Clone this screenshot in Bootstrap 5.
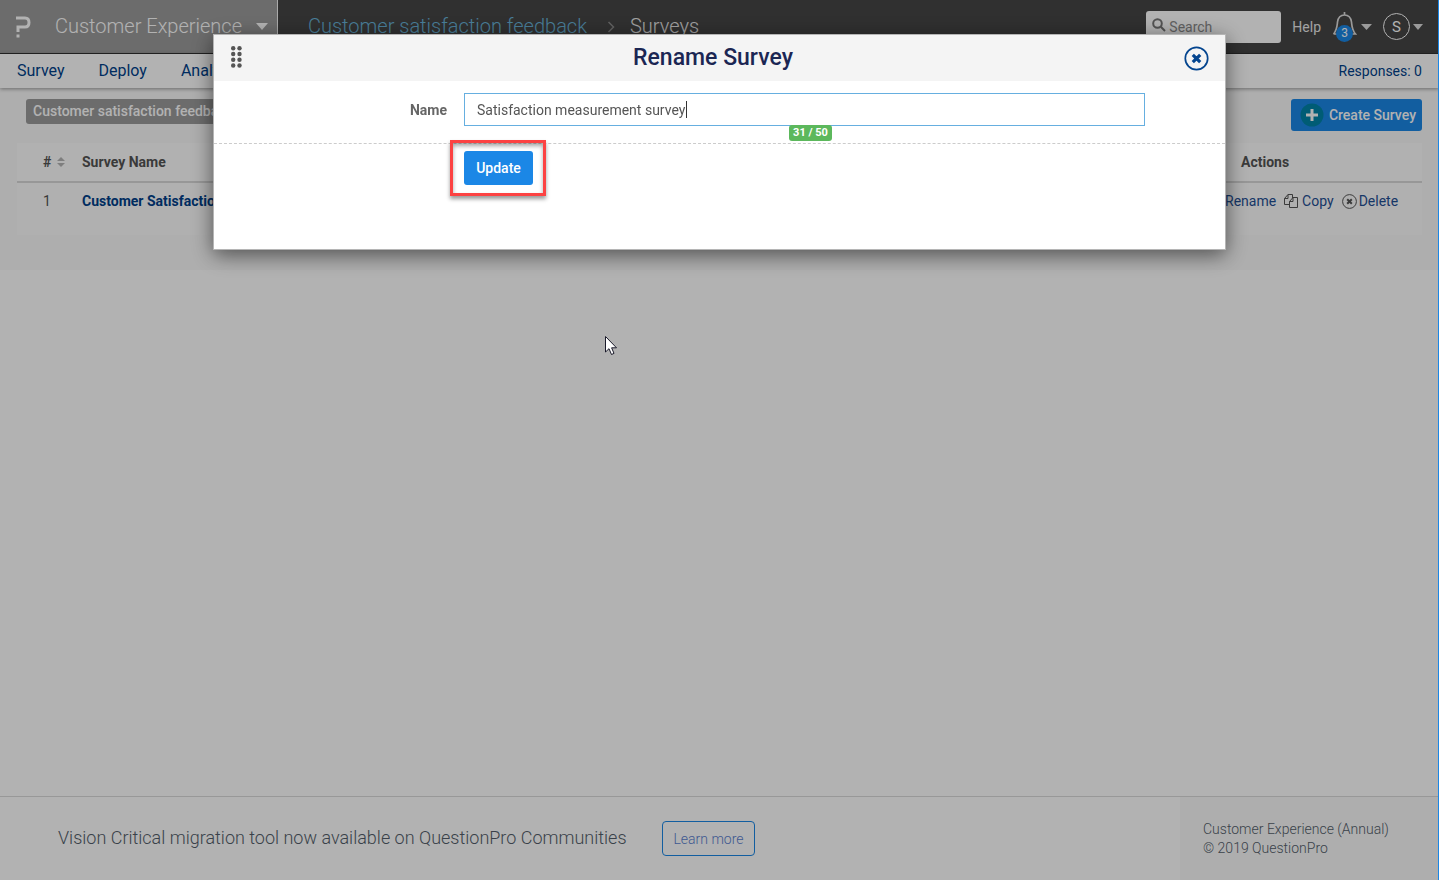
<!DOCTYPE html>
<html lang="en">
<head>
<meta charset="utf-8">
<meta name="viewport" content="width=device-width, initial-scale=1">
<title>Surveys - Customer Experience</title>
<link href="https://cdn.jsdelivr.net/npm/bootstrap@5.3.0/dist/css/bootstrap.min.css" rel="stylesheet">
<style>
  :root { --navy: #003f8a; --blue: #1b87e6; }
  body { font-family: Roboto, "Noto Sans", sans-serif; font-size: 14px; line-height: 20px; color: #545e6b; background: #fff; }
  a { text-decoration: none; color: var(--navy); }
  svg { display: block; flex: none; }
  .top-bar { background: #454545; height: 54px; border-bottom: 1px solid #333; color: #e8e8e8; }
  .product { width: 278px; background: #9b9b9b; border: 0; border-right: 1px solid #f4f4f4; color: #fff; }
  .product-name { margin-left: 24px; }
  .product-arrow { margin: 0 9px 0 auto; }
  .heading-text { font-size: 20px; line-height: 30px; font-weight: 300; white-space: nowrap; padding-bottom: 2px; }
  .crumbs { padding-left: 30px; }
  .crumb-link { color: #69b5dc; }
  .crumb-sep { margin: 2px 15px 0 20px; }
  .search-box { width: 135px; height: 32px; background: #fff; border-radius: 3px; padding: 0 6px; }
  .search-box input { font-size: 14px; min-width: 0; color: #555; padding: 0 0 0 3px; }
  .search-box input::placeholder { color: #8b8b8b; opacity: 1; }
  .help-link { margin: 0 11px; }
  .plain-btn { background: none; border: 0; padding: 0; color: #e8e8e8; }
  .bell-count { position: absolute; left: 4px; top: 13px; width: 17px; height: 17px; border-radius: 50%; background: var(--blue); color: #fff; font-size: 12px; line-height: 17px; text-align: center; }
  .avatar { width: 27px; height: 27px; border: 1px solid #fff; border-radius: 50%; color: #fff; font-size: 15px; line-height: 26px; }
  .account { margin-left: 11px; gap: 3px; }
  .sub-bar { height: 34px; background: #fff; box-shadow: 0 1px 4px rgba(0,0,0,.4); position: relative; padding: 0 17px; }
  .sub-bar .tabs { gap: 34px; font-size: 16px; }
  .response-count { color: var(--navy); }
  .work-area { background: #fafafa; padding: 11px 17px 35px; }
  .folder-tag { background: #9b9b9b; color: #fff; border-radius: 3px; font-weight: 500; height: 25px; line-height: 25px; padding: 0 7px; margin-left: 9px; }
  .btn-blue { background: var(--blue); color: #fff; border: 0; border-radius: 3px; font-size: 14px; line-height: 20px; font-weight: 500; }
  .btn-blue:hover { background: #1878cd; color: #fff; }
  .create-btn { height: 32px; padding: 0 6px 0 9px; gap: 5px; }
  .survey-table { margin: 12px 0 0; --bs-table-bg: transparent; background: #fcfcfc; }
  .survey-table th, .survey-table td { padding: 9px 0; border: 0; font-size: 14px; line-height: 20px; color: #545454; }
  .survey-table thead tr { background: #fefefe; border-bottom: 2px solid #d8d8d8; }
  .survey-table th { font-weight: 700; }
  .survey-table tbody td { height: 53px; padding-top: 8px; }
  .col-num { width: 65px; padding-left: 26px !important; }
  .col-num span { gap: 6px; }
  .col-actions { width: 214px; }
  .actions-title { padding-left: 33px; }
  .row-actions { padding-left: 17px; gap: 8px; }
  .row-actions a { color: #1f4f94; gap: 4px; }
  .row-actions a.tight { gap: 2px; }
  .foot { border-top: 1px solid #dadada; }
  .foot-note { font-size: 18px; line-height: 26px; font-weight: 300; padding: 0 0 2px 58px; min-width: 640px; }
  .foot-side { width: 259px; background: #fafafa; padding: 23px 22px 22px 23px; line-height: 19px; font-weight: 300; }
  .learn-btn { height: 35px; width: 93px; margin-left: 22px; border: 1px solid var(--blue); border-radius: 4px; color: #5b7fd0; font-weight: 300; font-size: 14px; padding: 0; }
  .modal-backdrop.show { opacity: .3; }
  .rename-modal .modal-dialog { max-width: 1013px; margin: 34px auto; }
  .rename-modal .modal-content { border: 1px solid #b5b5b5; border-radius: 0; box-shadow: 0 5px 20px rgba(0,0,0,.55); }
  .rename-modal .modal-header { height: 46px; background: #f4f4f4; border: 0; border-radius: 0; padding: 0 16px 0 17px; }
  .rename-modal .modal-title { font-size: 23px; line-height: 30px; font-weight: 500; color: #1b2653; }
  .rename-modal .modal-body { padding: 12px 0 64px; }
  .drag-handle { margin-bottom: 2px; }
  .field-name { width: 250px; padding: 1px 17px 0 0; line-height: 32px; font-weight: 700; color: #666; }
  .field-wrap { margin-right: 80px; }
  .field-wrap .form-control, .field-wrap .form-control:focus { height: 33px; border: 1px solid #66afe0; border-radius: 0; font-size: 14px; color: #555; padding: 0 12px; box-shadow: none; transition: none; }
  .caret-mark { position: absolute; left: 222px; top: 8px; width: 1px; height: 17px; background: #333; }
  .count-badge { position: absolute; left: 325px; top: 32px; width: 43px; background: #5cb85c; color: #fff; border-radius: 3px; font-size: 11px; line-height: 16px; font-weight: 700; text-align: center; }
  .update-row { border-top: 1px dashed #ccc; margin-top: 17px; padding: 7px 0 0 250px; }
  .update-btn { width: 69px; height: 34px; padding: 0; }
  .red-frame { position: absolute; inset: -11px -13px -11px -14px; border: 3px solid #fc4242; box-shadow: 0 3px 4px rgba(0,0,0,.4), inset 0 3px 4px rgba(0,0,0,.35); pointer-events: none; }
  .pointer { position: absolute; left: 604px; top: 335px; z-index: 1060; }
  .edge { position: fixed; right: 0; top: 0; bottom: 0; width: 1px; background: #1b87e6; z-index: 1070; }
</style>
</head>
<body>
<div class="d-flex flex-column min-vh-100">
  <header class="top-bar d-flex">
    <button class="product d-flex align-items-center p-0" type="button">
      <svg class="ms-3" width="15" height="22" viewBox="0 0 15 22" fill="none" stroke="currentColor" stroke-width="3"><path d="M0 2H9Q13 2 13 6.500T9 11H2V16"/><path d="M.5 20H3.500"/></svg>
      <span class="heading-text product-name">Customer Experience</span>
      <svg class="product-arrow" width="12" height="7"><path d="M0 0H12L6 7Z" fill="currentColor"/></svg>
    </button>
    <nav class="heading-text crumbs d-flex align-items-center flex-grow-1" aria-label="breadcrumb">
      <a class="crumb-link" href="#">Customer satisfaction feedback</a>
      <svg class="crumb-sep" width="8" height="12" viewBox="0 0 8 12" fill="none" stroke="#8b8b8b" stroke-width="1.500"><path d="M1.500 1L6.500 6L1.500 11"/></svg>
      <span>Surveys</span>
    </nav>
    <div class="d-flex align-items-center pe-3">
      <label class="search-box d-flex align-items-center">
        <svg class="mb-1" width="14" height="14" viewBox="0 0 14 14" fill="none" stroke="#777" stroke-width="2"><circle cx="5.500" cy="5.500" r="4.300"/><path d="M8.800 8.800L13 13"/></svg>
        <input class="border-0 bg-transparent w-100" type="text" placeholder="Search" aria-label="Search">
      </label>
      <a class="text-reset help-link" href="#">Help</a>
      <button class="plain-btn d-flex align-items-center" type="button" aria-label="Notifications">
        <span class="position-relative"><svg width="25" height="30" viewBox="0 0 25 30" fill="none" stroke="#ddd" stroke-width="1.700"><path d="M12.500 0V3M1.500 22C5 18 5 15 5.500 10Q6.500 3 12.500 3T19.500 10C20 15 20 18 23.500 22H1.500"/></svg><span class="bell-count">3</span></span>
        <svg class="ms-1" width="11" height="6"><path d="M0 0H11L5.500 6Z" fill="#ddd"/></svg>
      </button>
      <button class="plain-btn account d-flex align-items-center" type="button" aria-label="Account">
        <span class="avatar">S</span>
        <svg width="10" height="6"><path d="M0 0H10L5 6Z" fill="#ddd"/></svg>
      </button>
    </div>
  </header>
  <div class="sub-bar d-flex justify-content-between align-items-center">
    <nav class="tabs d-flex"><a href="#">Survey</a><a href="#">Deploy</a><a href="#">Analytics</a></nav>
    <span class="response-count">Responses: 0</span>
  </div>
  <main class="work-area">
    <div class="d-flex justify-content-between align-items-start">
      <span class="folder-tag">Customer satisfaction feedback</span>
      <button class="btn-blue create-btn d-flex align-items-center" type="button">
        <svg width="24" height="24" viewBox="0 0 24 24"><circle cx="12" cy="12" r="11.500" fill="#0085a8"/><path d="M12 6V18M6 12H18" stroke="#fff" stroke-width="3"/></svg>
        <span>Create Survey</span>
      </button>
    </div>
    <table class="survey-table table w-100">
      <thead><tr>
        <th class="col-num"><span class="d-flex align-items-center">#<svg width="8" height="10"><path d="M4 0L8 4H0ZM0 6H8L4 10Z" fill="#b5b5b5"/></svg></span></th>
        <th>Survey Name</th>
        <th class="col-actions"><span class="actions-title">Actions</span></th>
      </tr></thead>
      <tbody><tr>
        <td class="col-num">1</td>
        <td><a class="fw-bold" href="#">Customer Satisfaction Survey</a></td>
        <td class="col-actions"><div class="row-actions d-flex align-items-center">
          <a href="#">Rename</a>
          <a class="d-flex align-items-center" href="#"><svg width="14" height="14" viewBox="0 0 14 14" fill="none" stroke="#555"><path d="M5.500 10.500H.5V4.500L4 .5H8.500V4M4 .5V4.500H.5M5.500 7.500L9 3.500H13.500V13.500H5.500ZM9 3.500V7.500H5.500"/></svg>Copy</a>
          <a class="tight d-flex align-items-center" href="#"><svg width="15" height="15" viewBox="0 0 15 15" fill="none" stroke="#555"><circle cx="7.500" cy="7.500" r="6.900"/><path d="M5.200 5.200L9.800 9.800M9.800 5.200L5.200 9.800" stroke-width="2"/></svg>Delete</a>
        </div></td>
      </tr></tbody>
    </table>
  </main>
  <footer class="foot d-flex mt-auto">
    <div class="d-flex align-items-center flex-grow-1">
      <span class="foot-note">Vision Critical migration tool now available on QuestionPro Communities</span>
      <button class="learn-btn bg-transparent" type="button">Learn more</button>
    </div>
    <div class="foot-side">Customer Experience (Annual)<br>© 2019 QuestionPro</div>
  </footer>
</div>

<div class="modal-backdrop show"></div>
<div class="modal rename-modal show d-block" tabindex="-1" role="dialog" aria-labelledby="renameTitle">
  <div class="modal-dialog">
    <form class="modal-content">
      <div class="modal-header d-flex justify-content-between align-items-center">
        <svg class="drag-handle" width="11" height="22" viewBox="0 0 11 22" fill="#555"><circle cx="2.200" cy="2.200" r="2.200"/><circle cx="8.500" cy="2.200" r="2.200"/><circle cx="2.200" cy="8" r="2.200"/><circle cx="8.500" cy="8" r="2.200"/><circle cx="2.200" cy="13.800" r="2.200"/><circle cx="8.500" cy="13.800" r="2.200"/><circle cx="2.200" cy="19.500" r="2.200"/><circle cx="8.500" cy="19.500" r="2.200"/></svg>
        <h1 class="modal-title" id="renameTitle">Rename Survey</h1>
        <button class="plain-btn" type="button" aria-label="Close"><svg width="25" height="25" viewBox="0 0 25 25" fill="none" stroke="#04458f"><circle cx="12.500" cy="12.500" r="11.200" stroke-width="1.700"/><path d="M8.800 8.800L16.200 16.200M16.200 8.800L8.800 16.200" stroke-width="3.200"/></svg></button>
      </div>
      <div class="modal-body">
        <div class="d-flex">
          <label class="field-name text-end flex-shrink-0" for="surveyName">Name</label>
          <div class="field-wrap position-relative flex-grow-1">
            <input class="form-control" id="surveyName" type="text" maxlength="50" value="Satisfaction measurement survey">
            <span class="caret-mark"></span>
            <span class="count-badge">31 / 50</span>
          </div>
        </div>
        <div class="update-row">
          <span class="position-relative d-inline-block">
            <button class="btn-blue update-btn d-block" type="button">Update</button>
            <span class="red-frame"></span>
          </span>
        </div>
      </div>
    </form>
  </div>
</div>
<svg class="pointer" width="14" height="21" viewBox="0 0 14 21"><path d="M1.500 1.500V17L5 13.700L7.500 19.500L10 18.400L7.600 12.800H12.500Z" fill="#fff" stroke="#1a1a2a" stroke-width="1"/></svg>
<div class="edge"></div>
<script src="https://cdn.jsdelivr.net/npm/bootstrap@5.3.0/dist/js/bootstrap.bundle.min.js"></script>
</body>
</html>
